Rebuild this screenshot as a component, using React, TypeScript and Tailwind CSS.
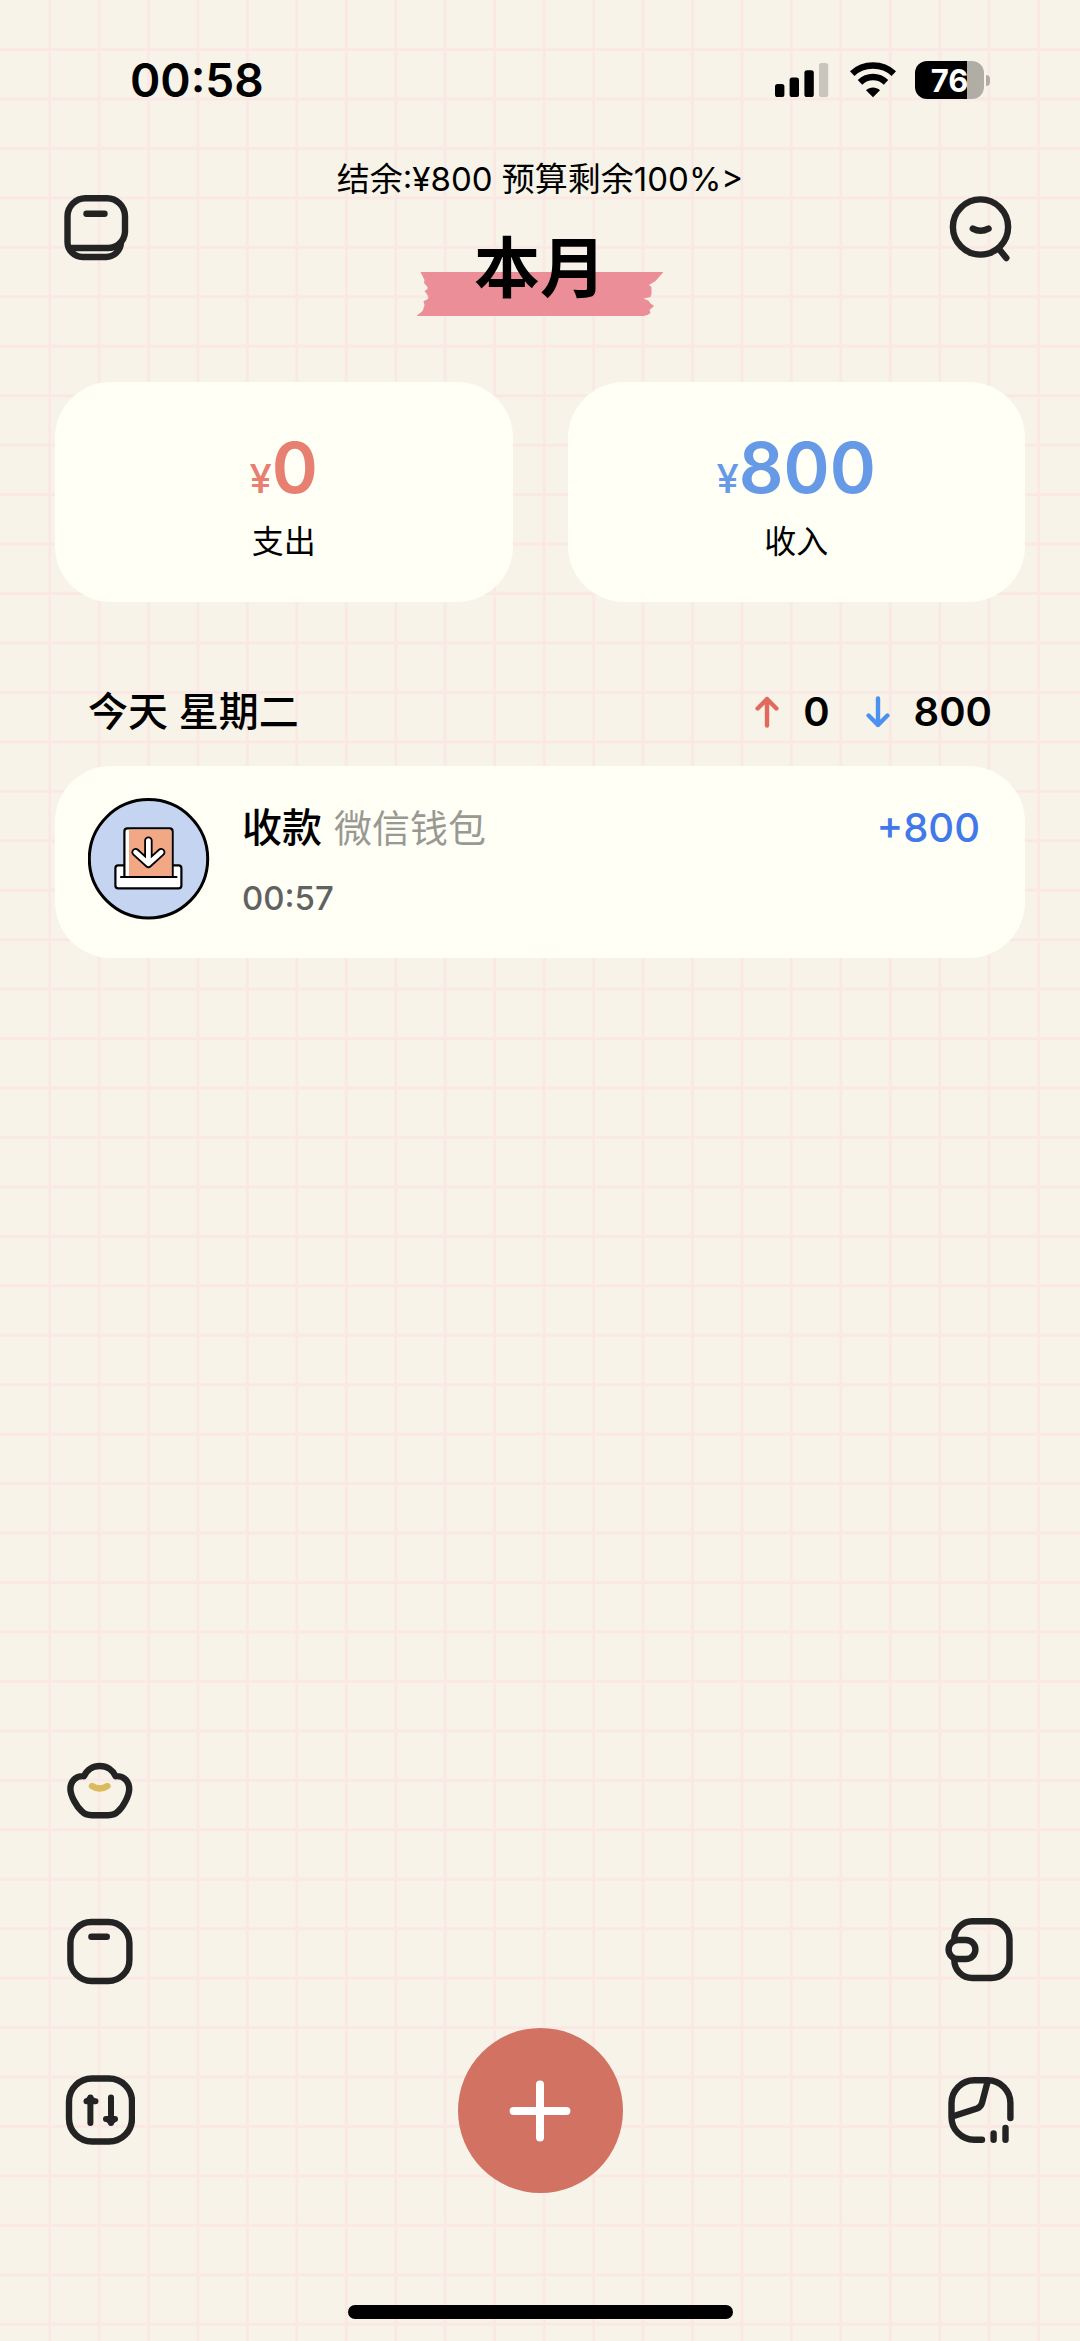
import React from 'react';

interface IconProps {
  className?: string;
}

interface SummaryCardProps {
  label: string;
  amount: number;
  amountClass: string;
}

interface IconButtonProps {
  label: string;
  children: React.ReactNode;
}

interface LedgerRecord {
  id: number;
  category: string;
  account: string;
  time: string;
  amount: string;
}

const RECORDS: LedgerRecord[] = [
  { id: 1, category: '收款', account: '微信钱包', time: '00:57', amount: '+800' },
];

// Shared stroke settings for the outlined icons
const outline = {
  fill: 'none',
  stroke: '#232323',
  strokeWidth: 6.4,
  strokeLinecap: 'round',
  strokeLinejoin: 'round',
} as const;

// Rows and columns are separate so that no line is drawn on the page edge
const GridPaper: React.FC = () => (
  <svg className="absolute inset-0 -z-10 h-full w-full" aria-hidden="true">
    <defs>
      <pattern id="columns" x="47" width="49.45" height="49.45" patternUnits="userSpaceOnUse">
        <path d="M2.6 0V49.45" stroke="#fbe7e4" strokeWidth="2.6" />
      </pattern>
      <pattern id="rows" y="47" width="49.45" height="49.45" patternUnits="userSpaceOnUse">
        <path d="M0 2.6H49.45" stroke="#fbe7e4" strokeWidth="2.6" />
      </pattern>
    </defs>
    <rect width="100%" height="100%" fill="#f7f3e8" />
    <rect x="47" width="100%" height="100%" fill="url(#columns)" />
    <rect y="47" width="100%" height="100%" fill="url(#rows)" />
  </svg>
);

const SignalIcon: React.FC<IconProps> = ({ className }) => (
  <svg className={className} viewBox="0 0 54 36" aria-hidden="true">
    <rect x="0" y="22" width="9.4" height="13" rx="2.6" />
    <rect x="14.6" y="15.6" width="9.4" height="19.4" rx="2.6" />
    <rect x="29.4" y="8.2" width="9.4" height="26.8" rx="2.6" />
    <rect x="44" y="1" width="9.2" height="34" rx="2.6" fill="#c8c5bc" />
  </svg>
);

const WifiIcon: React.FC<IconProps> = ({ className }) => (
  <svg className={className} viewBox="0 0 48 36" aria-hidden="true">
    <path
      d="M3.2 11.6C14.5 0.8 33.5 0.8 44.8 11.6M11 20.4C18.4 13.2 29.6 13.2 37 20.4"
      fill="none"
      stroke="#000"
      strokeWidth="6.4"
    />
    <path d="M17 28.2C21 24.5 27 24.5 31 28.2L24 35.2Z" />
  </svg>
);

const TapeStrip: React.FC<IconProps> = ({ className }) => (
  <svg className={className} viewBox="0 0 247 44" aria-hidden="true">
    <path
      d="M4 0H247L239 9L232.5 13L235 15V22L234 25L227 26.5L232.5 29L233.5 31L237.6 34L233 38L234 41Q231 44 227 44H0L6 39L7.5 35L8 33L7 29L10 28L12 26L11 23L8 19L11 17V15L7.5 11L8 8Z"
      fill="#ec8e98"
    />
  </svg>
);

const BookIcon: React.FC = () => (
  <svg className="size-[72px]" viewBox="0 0 72 72" {...outline}>
    <path d="M12 56H48A17 17 0 0 0 65 40V24A18 18 0 0 0 47 6.2H25.5A18 18 0 0 0 7.5 24V50A15 15 0 0 0 22.5 65H46A15 15 0 0 0 61 50.5" />
    <path d="M26.5 21.8H44.5" />
  </svg>
);

const SearchIcon: React.FC = () => (
  <svg className="size-[72px]" viewBox="0 0 72 72" {...outline}>
    <circle cx="32.5" cy="35" r="27.6" />
    <path d="M51 57L58.3 66M24.8 36.6Q32.5 41 40.5 36.6" />
  </svg>
);

const IngotIcon: React.FC = () => (
  <svg className="size-[70px]" viewBox="0 0 70 70" {...outline}>
    <path d="M19 21.2A17.3 17.3 0 0 1 50.6 21.2C58.5 20.6 64.2 26 64.2 34C64.2 41 58 52 53.5 56Q49.5 60.2 43 60.2H27Q20.5 60.2 16.5 56C12 52 5.4 41 5.4 34C5.4 26 11 20.6 19 21.2Z" />
    <path d="M27 31Q34.7 36 42.4 31" stroke="#dabb5e" />
  </svg>
);

const NoteIcon: React.FC = () => (
  <svg className="size-[70px]" viewBox="0 0 70 70" {...outline}>
    <rect x="5.4" y="7" width="59" height="59" rx="21" />
    <path d="M26.4 21.8H41.8" />
  </svg>
);

const TransferIcon: React.FC = () => (
  <svg className="size-[70px]" viewBox="0 0 70 70" {...outline}>
    <rect x="4" y="3.5" width="63" height="63" rx="23" />
    <path d="M25.4 22.5V48M21.5 26.3H30.5M46 22.5V48M41 44H50" strokeWidth="6" />
    <path d="M21 26L25.4 22L30 26M41.5 44.4L46 48.4L50.4 44.4" strokeWidth="4" />
  </svg>
);

const WalletIcon: React.FC = () => (
  <svg className="size-[70px]" viewBox="0 0 70 70" {...outline}>
    <path d="M9.3 25V24A18 18 0 0 1 27.3 6.3H46.5A18 18 0 0 1 64.5 24.3V45A18 18 0 0 1 46.5 63H27.3A18 18 0 0 1 9.3 45V44" />
    <rect x="3.6" y="25" width="26.8" height="19" rx="9.5" />
  </svg>
);

const ChartIcon: React.FC = () => (
  <svg className="size-[70px]" viewBox="0 0 70 70" {...outline}>
    <path d="M65.4 43V28A22.7 22.7 0 0 0 42.7 5.3H29.2A22.7 22.7 0 0 0 6.5 28V42A22.7 22.7 0 0 0 29.2 64.8H37" />
    <path d="M42.5 7L37 28Q36 32 32 33.5L8 41.2M48.6 58.4V64.8M60.5 53V64.8" />
  </svg>
);

const PlusIcon: React.FC = () => (
  <svg className="size-16" viewBox="0 0 64 64" fill="none" stroke="#fff" strokeWidth="8" strokeLinecap="round">
    <path d="M32 5.6V58.4M5.6 32H58.4" />
  </svg>
);

const ArrowIcon: React.FC<IconProps & { down?: boolean }> = ({ className, down = false }) => (
  <svg
    className={className}
    viewBox="0 0 24 32"
    fill="none"
    stroke="currentColor"
    strokeWidth="4.4"
    strokeLinecap="round"
    strokeLinejoin="round"
    aria-hidden="true"
  >
    <path d={down ? 'M12 2.5V29M2.6 19.5L12 29L21.4 19.5' : 'M12 29.5V3M2.6 12.5L12 3L21.4 12.5'} />
  </svg>
);

const IncomeIcon: React.FC = () => (
  <svg className="size-[122px] shrink-0" viewBox="0 0 122 122" aria-hidden="true">
    <circle cx="60.5" cy="60.8" r="59.2" fill="#c5d5f1" stroke="#000" strokeWidth="3" />
    <g stroke="#000" strokeWidth="2.2" strokeLinecap="round" strokeLinejoin="round">
      <rect x="27.4" y="67.4" width="66" height="23" rx="2.8" fill="#fff" />
      <path d="M36.4 79V33.4Q36.4 30.4 39.4 30.4H81.6Q84.6 30.4 84.6 33.4V79Z" fill="#fff" />
      <path d="M41 78V31.5H81Q83.5 31.5 83.5 34V78Z" fill="#f2a785" stroke="none" />
      <path d="M33 79H88.5" />
    </g>
    <g fill="none" strokeLinecap="round" strokeLinejoin="round">
      <path d="M60.4 42.6V65M47.6 54.2L60.4 65.8L73.2 54.2" stroke="#000" strokeWidth="8.4" />
      <path d="M60.4 42.6V65M47.6 54.2L60.4 65.8L73.2 54.2" stroke="#fff" strokeWidth="4.8" />
    </g>
  </svg>
);

const IconButton: React.FC<IconButtonProps> = ({ label, children }) => (
  <button type="button" aria-label={label}>
    {children}
  </button>
);

const SummaryCard: React.FC<SummaryCardProps> = ({ label, amount, amountClass }) => (
  <div className="flex flex-1 flex-col items-center rounded-[56px] bg-[#fffff6] pt-[46px] pb-[38px]">
    <div className={`flex h-20 items-baseline leading-[80px] ${amountClass}`}>
      <span className="text-[40px] font-medium">¥</span>
      <span className="text-[70px] font-semibold">{amount}</span>
    </div>
    <div className="mt-3 text-[32px] leading-[44px]">{label}</div>
  </div>
);

const StatusBar: React.FC = () => (
  <div className="flex items-center justify-between pt-[50px] pr-[90px] pl-[130px]">
    <span className="text-[46px] leading-[60px] font-semibold">00:58</span>
    <div className="flex items-center">
      <SignalIcon className="h-9 w-[54px]" />
      <WifiIcon className="ml-5 h-9 w-12" />
      <div className="ml-[18px] flex items-center gap-[2px]">
        <div className="flex h-[38px] w-[69px] items-center justify-center rounded-[12px] bg-linear-to-r from-black from-76% to-[#b0ada5] to-76% text-[31px] leading-none font-bold text-white">
          76
        </div>
        <div className="h-[11px] w-1 rounded-r-full bg-[#b0ada5]" />
      </div>
    </div>
  </div>
);

const App: React.FC = () => {
  return (
    <div className="relative isolate flex min-h-screen flex-col overflow-hidden font-['Inter','Noto_Sans_CJK_SC',sans-serif] text-black">
      <GridPaper />
      <StatusBar />

      {/* Month header */}
      <header className="mt-12 flex items-start justify-between px-[60px]">
        <div className="pt-[34px]">
          <IconButton label="账本">
            <BookIcon />
          </IconButton>
        </div>
        <div className="flex flex-col items-center">
          <a href="#budget" className="text-[33px] leading-[42px]">
            结余:¥800 预算剩余100%&gt;
          </a>
          <h1 className="relative mt-7 px-14 text-[66px] leading-[80px] font-bold">
            <TapeStrip className="absolute top-11 left-1/2 -z-10 h-11 w-[247px] -translate-x-1/2" />
            本月
          </h1>
        </div>
        <div className="pt-[34px]">
          <IconButton label="搜索">
            <SearchIcon />
          </IconButton>
        </div>
      </header>

      <main className="px-[55px] pt-[74px]">
        <section className="flex gap-[55px]">
          <SummaryCard label="支出" amount={0} amountClass="text-[#e78071]" />
          <SummaryCard label="收入" amount={800} amountClass="text-[#669ae7]" />
        </section>

        {/* Daily records */}
        <section className="mt-20">
          <div className="flex items-center justify-between px-[33px] text-[40px] leading-[60px] font-medium">
            <h2>今天 星期二</h2>
            <div className="flex items-center font-semibold">
              <ArrowIcon className="h-8 w-6 text-[#e06b5d]" />
              <span className="ml-6">0</span>
              <ArrowIcon down className="ml-9 h-8 w-6 text-[#4b91f1]" />
              <span className="ml-6">800</span>
            </div>
          </div>
          <ul className="mt-6">
            {RECORDS.map((record) => (
              <li
                key={record.id}
                className="flex items-start rounded-[56px] bg-[#fffff6] pt-8 pr-[45px] pb-9 pl-[33px]"
              >
                <IncomeIcon />
                <div className="ml-8 flex-1">
                  <div className="flex items-baseline gap-3 leading-[60px]">
                    <span className="text-[40px] font-medium">{record.category}</span>
                    <span className="text-[38px] text-[#999994]">{record.account}</span>
                  </div>
                  <div className="mt-4 text-[33px] leading-[48px] font-medium text-[#616161]">{record.time}</div>
                </div>
                <span className="text-[40px] leading-[60px] font-medium text-[#4179ea]">{record.amount}</span>
              </li>
            ))}
          </ul>
        </section>
      </main>

      {/* Bottom actions */}
      <nav className="mt-auto flex items-end justify-between px-[65px]">
        <div className="flex flex-col gap-[90px] pb-12">
          <IconButton label="存钱">
            <IngotIcon />
          </IconButton>
          <IconButton label="记事">
            <NoteIcon />
          </IconButton>
          <IconButton label="转账">
            <TransferIcon />
          </IconButton>
        </div>
        <button
          type="button"
          aria-label="记一笔"
          className="flex size-[165px] items-center justify-center rounded-full bg-[#d27263]"
        >
          <PlusIcon />
        </button>
        <div className="flex flex-col gap-[90px] pb-12">
          <IconButton label="资产">
            <WalletIcon />
          </IconButton>
          <IconButton label="统计">
            <ChartIcon />
          </IconButton>
        </div>
      </nav>

      <div className="mx-auto mt-28 mb-[22px] h-[14px] w-[385px] rounded-full bg-black" />
    </div>
  );
};

export default App;
